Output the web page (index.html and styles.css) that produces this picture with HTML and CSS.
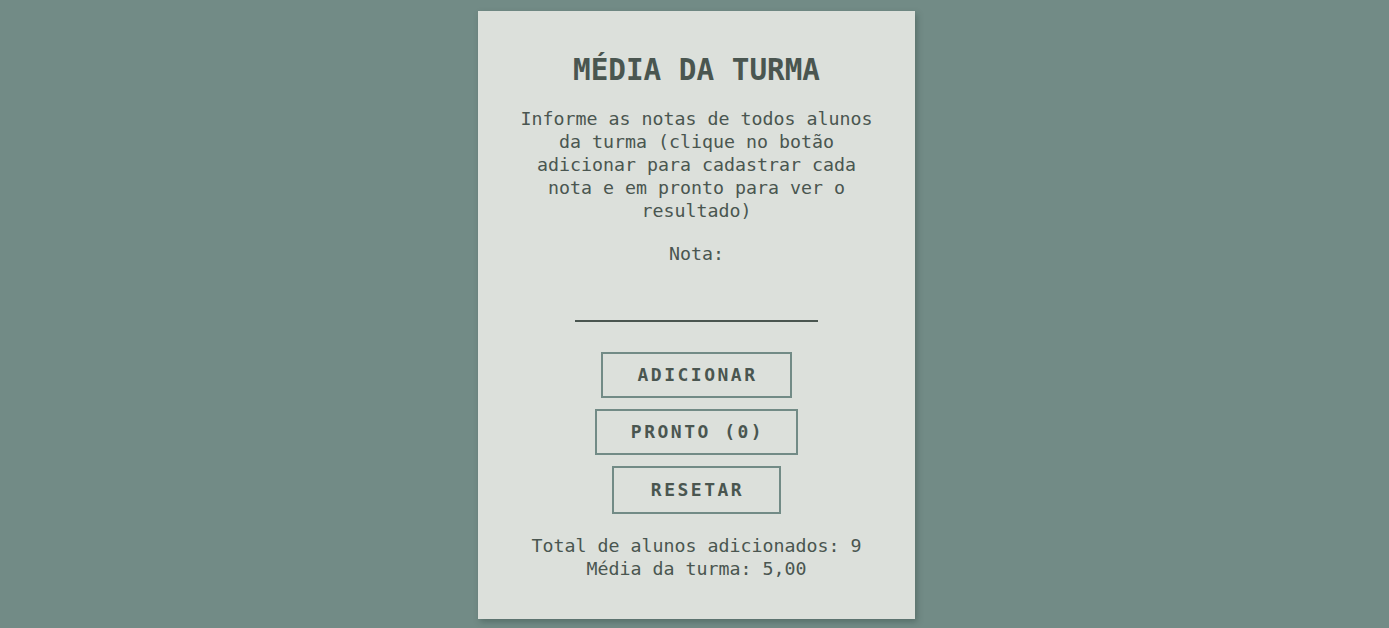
FILE: index.html
```html
<!DOCTYPE html>
<html lang="pt-BR">
<head>
<meta charset="utf-8">
<title>Média da Turma</title>
<link rel="stylesheet" href="styles.css">
</head>
<body>
<main class="card">
  <h1 class="title">MÉDIA DA TURMA</h1>
  <p class="intro">Informe as notas de todos alunos da turma (clique no botão adicionar para cadastrar cada nota e em pronto para ver o resultado)</p>
  <label class="label" for="nota">Nota:</label>
  <input class="field" id="nota" type="text">
  <div class="actions">
    <button class="btn">ADICIONAR</button>
    <button class="btn">PRONTO (0)</button>
    <button class="btn btn-reset">RESETAR</button>
  </div>
  <div class="result">
    <div>Total de alunos adicionados: 9</div>
    <div>Média da turma: 5,00</div>
  </div>
</main>
</body>
</html>
```

FILE: styles.css
```css
html, body {
  margin: 0;
  padding: 0;
}
body {
  background: #728b86;
  font-family: "DejaVu Sans Mono", "Liberation Mono", monospace;
  color: #4a5650;
  display: flex;
  justify-content: center;
  padding-left: 4px;
}
.card {
  width: 437px;
  box-sizing: border-box;
  margin-top: 11px;
  margin-bottom: 9px;
  background: #dce0db;
  box-shadow: 2px 3px 6px rgba(40, 60, 55, 0.35);
  padding: 42px 38px 39px;
  display: flex;
  flex-direction: column;
  align-items: center;
  text-align: center;
}
.title {
  margin: 0;
  font-size: 29.3px;
  line-height: 34px;
  font-weight: bold;
  color: #4a5650;
}
.intro {
  margin: 20px 0 0;
  font-size: 18.3px;
  line-height: 23px;
}
.label {
  margin-top: 20px;
  font-size: 18.3px;
  line-height: 23px;
}
.field {
  margin-top: 17px;
  width: 243px;
  height: 40px;
  box-sizing: border-box;
  border: none;
  border-bottom: 2px solid #4a5650;
  background: transparent;
  outline: none;
  font-family: inherit;
  font-size: 18px;
  color: #4a5650;
  text-align: center;
}
.actions {
  margin-top: 30px;
  display: flex;
  flex-direction: column;
  align-items: center;
  gap: 11px;
}
.btn {
  font-family: inherit;
  font-size: 18px;
  line-height: 22px;
  font-weight: bold;
  letter-spacing: 2.5px;
  color: #4a5650;
  background: transparent;
  border: 2px solid #728b86;
  padding: 10px 32px 10px 34px;
  cursor: pointer;
}
.btn-reset {
  padding: 11px 35px 11px 37px;
}
.result {
  margin-top: 20px;
  font-size: 18.3px;
  line-height: 23px;
}
```
